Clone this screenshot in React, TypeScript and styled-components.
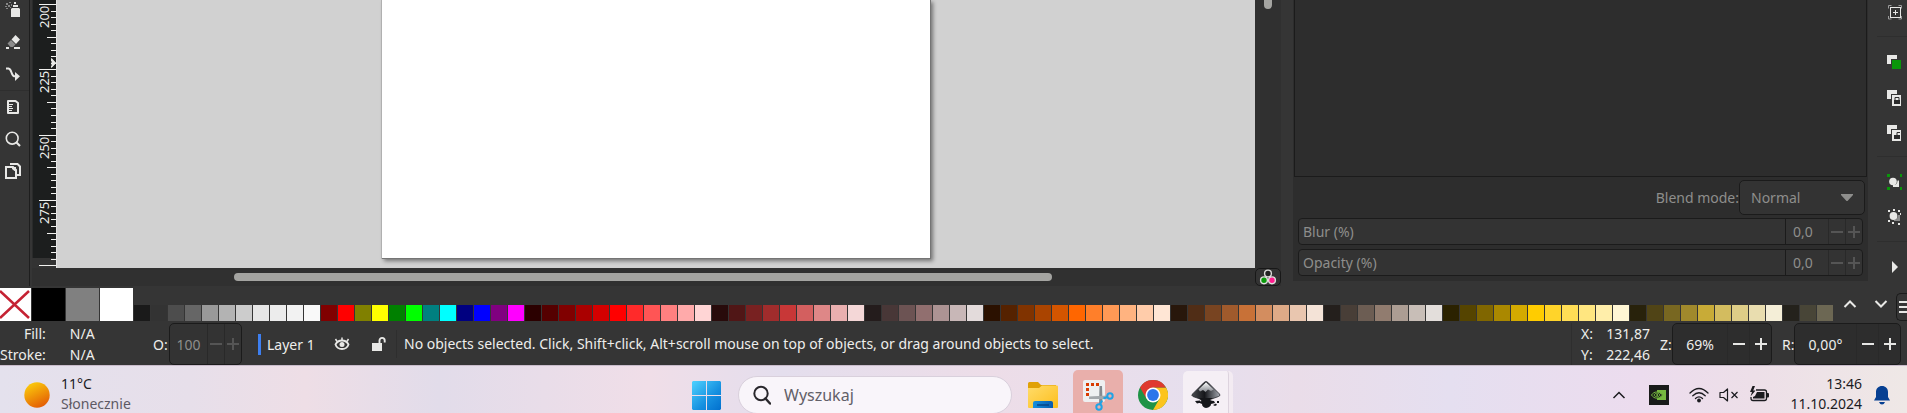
import React from "react";
import styled, { createGlobalStyle, css } from "styled-components";

const GlobalStyle = createGlobalStyle`
  *, *::before, *::after { box-sizing: border-box; }
  body { margin: 0; background: #353535; }
  button, input, select {
    font: inherit;
    color: inherit;
    background: none;
    border: 0;
    margin: 0;
    padding: 0;
    border-radius: 0;
    outline: none;
    appearance: none;
  }
  svg { display: block; flex: none; }
`;

const Desktop = styled.div`
  display: flex;
  flex-direction: column;
  height: 100vh;
  overflow: hidden;
  background: #353535;
  color: #eeeeec;
  font-family: "Noto Sans", "Open Sans", sans-serif;
  font-size: 14px;
  line-height: 21px;
`;

/* ---------- Work area ---------- */

const WorkArea = styled.main`
  display: flex;
  flex: 1;
  min-height: 0;
`;

const ToolBox = styled.nav`
  display: flex;
  flex-direction: column;
  flex: none;
  width: 30px;
  border-right: 1px solid #1e1e1e;
  overflow: hidden;
`;

const ToolList = styled.div`
  margin-top: -6px;
`;

const ToolButton = styled.button`
  display: flex;
  align-items: center;
  justify-content: center;
  width: 26px;
  height: 32px;
`;

const Rule = styled.hr`
  height: 1px;
  margin: 0;
  border: 0;
  background: #2e2e2e;
`;

const Editor = styled.section`
  display: grid;
  grid-template-columns: 24px minmax(0, 1fr) 26px;
  grid-template-rows: minmax(0, 1fr) 18px;
  flex: 1;
  min-width: 0;
  margin-left: 2px;
  background: #303030;
`;

const RulerBox = styled.div`
  overflow: hidden;
  background: #333333;
`;

const Canvas = styled.div`
  display: flex;
  justify-content: center;
  overflow: hidden;
  padding-bottom: 9px;
  background: #d1d1d1;
  border-left: 1px solid #e4e4e4;
`;

const Sheet = styled.div`
  width: 46%;
  max-width: 549px;
  background: #ffffff;
  border: solid #757575;
  border-width: 0 1px 1px 0;
  box-shadow: -1px 0 0 #b0b0b0, 2px 2px 4px rgba(0, 0, 0, 0.45);
`;

const VerticalTrack = styled.div`
  display: flex;
  justify-content: center;
`;

const HorizontalTrack = styled.div`
  display: flex;
  align-items: center;
  grid-column: 1 / 3;
  padding: 0 203px 0 202px;
`;

const VerticalThumb = styled.div`
  width: 8px;
  height: 9px;
  border-radius: 0 0 4px 4px;
  background: #a4a4a1;
`;

const HorizontalThumb = styled.div`
  flex: 1;
  height: 8px;
  border-radius: 4px;
  background: #a4a4a1;
`;

const ColorManageButton = styled.button`
  display: flex;
  align-items: center;
  justify-content: center;
  border: 1px solid #181818;
  border-radius: 5px;
  background: #333333;
`;

/* ---------- Dock panel ---------- */

const Dock = styled.aside`
  display: flex;
  flex-direction: column;
  flex: none;
  width: 575px;
  margin: 0 0 5px 12px;
  background: #2d2d2d;
  color: #8e8e8c;
`;

const ObjectList = styled.div`
  flex: 1;
  margin: 0 1px;
  border: 1px solid #1b1b1b;
  border-top: 0;
`;

const BlendRow = styled.div`
  display: flex;
  align-items: center;
  justify-content: flex-end;
  height: 35px;
  margin: 3px 3px 3px 0;
`;

const SelectBox = styled.div`
  display: grid;
  align-items: center;
  width: 126px;
  height: 35px;
  border: 1px solid #1b1b1b;
  border-radius: 5px;
  background: #333333;

  & > select, & > svg { grid-area: 1 / 1; }
  & > select { height: 33px; padding-left: 11px; }
  & > svg { justify-self: end; margin-right: 11px; pointer-events: none; }
`;

const SliderField = styled.div`
  display: flex;
  height: 27px;
  margin: 0 5px 4px;
  border: 1px solid #1b1b1b;
  border-radius: 4px;
  background: #333333;

  & > label {
    flex: 1;
    padding-left: 4px;
    line-height: 25px;
    border-right: 1px solid #1b1b1b;
  }
  & > input { width: 42px; padding-left: 7px; }

  &:last-child { margin-bottom: 5px; }
`;

const StepButton = styled.button<{ $wide?: boolean; $dim?: boolean }>`
  display: flex;
  align-items: center;
  justify-content: center;
  width: ${(p) => (p.$wide ? 22 : 17)}px;
  border-left: 1px solid #292929;
  color: ${(p) => (p.$dim ? "#555555" : "#e6e6e4")};
`;

const CommandBar = styled.nav`
  flex: none;
  width: 39px;
  padding-left: 9px;
  overflow: hidden;

  & hr { margin: 7px 0; }
`;

const CommandList = styled.div`
  margin-top: -6px;
`;

const CommandButton = styled.button`
  display: flex;
  align-items: center;
  width: 30px;
  height: 35px;
  padding-left: 8px;
`;

/* ---------- Palette ---------- */

const Palette = styled.section`
  display: flex;
  align-items: flex-end;
  flex: none;
  height: 35px;
  overflow: hidden;
`;

const SwatchRow = styled.div`
  display: flex;
  align-items: flex-end;
  gap: 1px;
  flex: 1;
  min-width: 0;
  overflow: hidden;
`;

const Swatch = styled.button<{ $color: string; $large?: boolean }>`
  flex: none;
  background: ${(p) => p.$color};
  ${(p) =>
    p.$large
      ? css`width: 33px; height: 33px;`
      : css`width: 16px; height: 16px;`}
`;

const NoColorSwatch = styled.button`
  flex: none;
  width: 31px;
  height: 33px;
  background: #ffffff;
`;

const PaletteButton = styled.button`
  display: flex;
  align-items: center;
  justify-content: center;
  flex: none;
  width: 31px;
  height: 35px;
`;

const PaletteMenu = styled.button`
  flex: none;
  width: 11px;
  height: 28px;
  padding-left: 2px;
  border: 1px solid #1b1b1b;
  border-right: 0;
  border-radius: 5px 0 0 5px;
`;

/* ---------- Status bar ---------- */

const StatusBar = styled.footer`
  display: flex;
  align-items: center;
  flex: none;
  height: 44px;
  padding: 2px 6px 0 0;
  white-space: nowrap;
`;

const StyleGrid = styled.div`
  display: grid;
  grid-template-columns: auto 1fr;
  column-gap: 24px;
  flex: none;
  width: 153px;

  & > span:nth-child(odd) {
    min-width: 43px;
    text-align: right;
  }
`;

const SpinLabel = styled.label<{ $width: number; $gap?: number }>`
  flex: none;
  width: ${(p) => p.$width}px;
  margin-left: ${(p) => p.$gap ?? 0}px;
`;

const SpinBox = styled.div<{ $width: number; $dim?: boolean }>`
  display: flex;
  flex: none;
  width: ${(p) => p.$width}px;
  height: 42px;
  border: 1px solid #1b1b1b;
  border-radius: 5px;
  background: ${(p) => (p.$dim ? "#333333" : "#2d2d2d")};
  color: ${(p) => (p.$dim ? "#8e8e8c" : "#eeeeec")};

  & > input { flex: 1; min-width: 0; text-align: center; }
`;

const LayerButton = styled.button`
  display: flex;
  align-items: center;
  gap: 6px;
  flex: none;
  width: 74px;
  margin-left: 16px;

  &::before {
    content: "";
    width: 3px;
    height: 21px;
    background: #3d7ff0;
  }
`;

const IconButton = styled.button`
  display: flex;
  align-items: center;
  justify-content: center;
  flex: none;
  width: 20px;
  height: 30px;

  & + & { margin-left: 17px; }
`;

const Message = styled.p`
  flex: 1;
  min-width: 0;
  margin: 0 0 0 7px;
  padding-left: 7px;
  overflow: hidden;
  line-height: 28px;
  border-left: 1px solid #2e2e2e;
`;

const Coordinates = styled.div`
  display: grid;
  grid-template-columns: 1fr auto;
  flex: none;
  width: 89px;
  padding: 0 10px 0 9px;
  border-left: 1px solid #2e2e2e;
`;

/* ---------- Taskbar ---------- */

const Taskbar = styled.footer`
  flex: none;
  height: 48px;
  overflow: hidden;
  border-top: 1px solid #c9bccb;
  color: #1b1b1f;
  background: linear-gradient(
    90deg,
    #e4e1ed 0%, #e7dfea 10%, #eedee6 16%, #e2dcea 23%, #f0dee8 34%,
    #e4deed 41%, #eddde8 52%, #e6dfee 63%, #eadde9 68%, #e5dff0 76%,
    #ecdcee 86%, #eddfe8 92%, #efe8e6 100%
  );
`;

const TaskbarRow = styled.div`
  display: grid;
  grid-template-columns: 1fr auto 1fr;
  align-items: center;
  height: 58px;
`;

const Weather = styled.button`
  display: flex;
  align-items: center;
  gap: 11px;
  padding-left: 24px;
  line-height: 20px;
  text-align: left;

  & > span { padding-bottom: 2px; }
  & small { display: block; font-size: 14px; color: #5d5963; }
`;

const Apps = styled.div`
  display: flex;
  align-items: center;
  padding-left: 18px;
`;

const StartButton = styled.button`
  margin-right: 17px;
`;

const SearchBox = styled.label`
  display: flex;
  align-items: center;
  gap: 13px;
  width: 274px;
  height: 38px;
  margin-right: 6px;
  padding-left: 14px;
  border: 1px solid #d9d0dc;
  border-radius: 19px;
  background: #f9f5fa;
  font-size: 16px;

  & > input { flex: 1; min-width: 0; }
  & > input::placeholder { color: #626068; opacity: 1; }
`;

const AppButton = styled.button<{ $tone?: "alert" | "active" }>`
  display: flex;
  align-items: center;
  justify-content: center;
  flex: none;
  width: 50px;
  height: 50px;
  border-radius: 5px;

  & + & { margin-left: 5px; }

  ${(p) => p.$tone === "alert" && css`background: #e9afab;`}
  ${(p) =>
    p.$tone === "active" &&
    css`
      height: 48px;
      border: solid #f3ebf2;
      border-width: 0 4px 0 0;
      background: #f5eff5;
      box-shadow: inset -1px 0 0 #ddd3de;
    `}
`;

const Tray = styled.div`
  display: flex;
  align-items: center;
  justify-content: flex-end;
  padding-right: 17px;
`;

const TrayButton = styled.button<{ $gap: number }>`
  margin-right: ${(p) => p.$gap}px;
`;

const Clock = styled.button`
  margin-right: 12px;
  padding-bottom: 2px;
  text-align: right;
  line-height: 20px;

  & time { display: block; }
`;

/* ---------- Drawings ---------- */

const INK = "#e8e8e6";

const Ruler = () => {
  const step = 6.53;
  const ticks = Array.from({ length: 41 }, (_, i) => i);
  const labels = ["200", "225", "250", "275"];
  return (
    <svg width="24" height="268" aria-label="Vertical ruler">
      <rect width="24" height="258" fill="#1c1e1e" />
      <rect width="1" height="258" fill="#2a2b2b" />
      {ticks.map((i) => {
        const length = i % 10 === 0 ? 17 : i % 5 === 0 ? 9 : 5;
        return (
          <rect key={i} x={24 - length} y={Math.round(4 + i * step)} width={length} height="1" fill="#f2f2f0" />
        );
      })}
      {labels.map((text, i) => {
        const top = Math.round(4 + i * 10 * step);
        return (
          <svg key={text} x="0" y={top + 2} width="18" height="23">
            <text transform="translate(17 22) rotate(-90)" fill="#eeeeec" fontSize="13">
              {text}
            </text>
          </svg>
        );
      })}
      <path d="M19 58v3h1v5h-1v2l5-5z" fill={INK} />
      <path d="M19.500 58L24 63l-4.500 5z" fill={INK} />
    </svg>
  );
};

const SprayIcon = () => (
  <svg width="16" height="16" viewBox="0 0 16 16">
    <path d="M9 0h2v2H9zM8 3h5v2H8zM6 7l1-1h7l1 1v8H6z" fill={INK} />
    <path d="M1 1h2v2H1zM4 0h2v1H4zM6 2h1v2H6zM3 3h2v2H3zM0 4h2v1H0zM1 6h2v1H1zM5 5h1v1H5z" fill="#858585" />
  </svg>
);

const EraserIcon = () => (
  <svg width="16" height="16" viewBox="0 0 16 16">
    <path d="M10.500 1L15 5.500 11 10 6.500 5.500z" fill={INK} />
    <path d="M6 6l4.500 4.500L8 13H5.500L2.500 9.500z" fill="#8b8b8b" />
    <path d="M1 13h3v2H1zM9 13h6v2H9z" fill={INK} />
  </svg>
);

const ConnectorIcon = () => (
  <svg width="16" height="16" viewBox="0 0 16 16">
    <path d="M1 2.500h2.500C7 3 6 9.500 9 10.200h2" fill="none" stroke={INK} strokeWidth="2" />
    <path d="M10 6l5 4.200L10 15z" fill={INK} />
  </svg>
);

const MeasureIcon = () => (
  <svg width="14" height="16" viewBox="0 0 14 16">
    <path d="M2 2h7.500l2.500 2v10H2z" fill="none" stroke={INK} strokeWidth="2" strokeLinejoin="round" />
    <path d="M3 5.500h4M3 7.500h3M3 9.500h4M3 11.500h3" stroke={INK} />
  </svg>
);

const ZoomIcon = () => (
  <svg width="16" height="16" viewBox="0 0 16 16">
    <circle cx="7.200" cy="7.200" r="5.900" fill="none" stroke={INK} strokeWidth="1.600" />
    <path d="M11 11l4 4" stroke={INK} strokeWidth="2.200" />
  </svg>
);

const PagesIcon = () => (
  <svg width="16" height="16" viewBox="0 0 16 16">
    <path d="M1 4h7l3 3v8H1z" fill="none" stroke={INK} strokeWidth="2" />
    <path d="M7 4h4v4H9.500L7 6z" fill={INK} />
    <path d="M5 1h7.500L15 3.500V12h-3" fill="none" stroke={INK} strokeWidth="2" />
  </svg>
);

const ColorManageIcon = () => (
  <svg width="18" height="16" viewBox="0 0 18 16">
    <g strokeWidth="1.400" stroke="#dededc">
      <circle cx="9" cy="4.500" r="3.400" fill="#222222" />
      <circle cx="5" cy="11.300" r="3.400" fill="#0a9a0a" />
      <circle cx="13" cy="11.300" r="3.400" fill="#ff1d8e" />
    </g>
  </svg>
);

const PageCenterIcon = () => (
  <svg width="20" height="20" viewBox="0 0 20 20">
    <path d="M3.500 6.500v-3h3M13.500 3.500h3v3M16.500 14v3h-3M6.500 17h-3v-3" fill="none" stroke="#9a9a9a" />
    <rect x="5.500" y="5.500" width="10" height="10" fill="none" stroke={INK} />
    <path d="M10.500 8v5M8 10.500h5" stroke={INK} />
  </svg>
);

const CloneIcon = ({ kind }: { kind: "plain" | "locked" | "unlocked" }) => (
  <svg width="20" height="20" viewBox="0 0 20 20">
    <path d="M2 3h10v4H6v5H2z" fill={INK} />
    {kind === "plain" ? (
      <rect x="7" y="8" width="9" height="9" fill="#0a960a" />
    ) : (
      <>
        <rect x="7" y="8" width="9" height="11" fill={INK} />
        <rect x="9" y="13" width="6" height="4" fill="#2b2b2b" />
        <path
          d={kind === "locked" ? "M10 13v-2.500h4V13" : "M12 13v-2.500h3"}
          fill="none"
          stroke="#2b2b2b"
        />
      </>
    )}
  </svg>
);

const GroupIcon = () => (
  <svg width="20" height="20" viewBox="0 0 20 20">
    <path d="M2 2h3v3H2zM15 2h2v3h-2zM2 15h3v3H2zM15 15h2v3h-2z" fill="#0a960a" />
    <path d="M12.500 8.500H14V15H8v-2c3 0 4.500-1.500 4.500-4.500z" fill={INK} />
    <circle cx="8" cy="9.500" r="3.800" fill={INK} />
  </svg>
);

const UngroupIcon = () => (
  <svg width="20" height="20" viewBox="0 0 20 20">
    <path d="M3 3h2v2H3zM8 2h2v2H8zM13 3h2v2h-2zM15 6h1v2h-1zM3 13h2v2H3zM7 15h2v2H7zM13 16h2v2h-2z" fill={INK} />
    <path d="M13 8h2v6H9v-1c2.500 0 4-2 4-5z" fill="#8b8b8b" />
    <circle cx="8.500" cy="9" r="3.900" fill={INK} />
  </svg>
);

const ExpandIcon = () => (
  <svg width="20" height="20" viewBox="0 0 20 20">
    <path d="M7 4l6 6-6 6z" fill={INK} />
  </svg>
);

const Minus = ({ size }: { size: number }) => (
  <svg width={size} height={size} viewBox="0 0 12 12">
    <path d="M0 6h12" stroke="currentColor" strokeWidth="2" />
  </svg>
);

const Plus = ({ size }: { size: number }) => (
  <svg width={size} height={size} viewBox="0 0 12 12">
    <path d="M0 6h12M6 0v12" stroke="currentColor" strokeWidth="2" />
  </svg>
);

const EyeIcon = () => (
  <svg width="16" height="16" viewBox="0 0 16 16">
    <path d="M1.500 8.500C3 5.500 5 4.500 8 4.500s5 1 6.500 4c-1 3-3.500 4.500-6.500 4.500s-5.500-1.500-6.500-4.500z" fill="none" stroke={INK} strokeWidth="1.800" />
    <path d="M3 5.500L1.500 3M8 4V1.500M13 5.500L14.500 3" stroke={INK} strokeWidth="1.500" />
    <circle cx="8" cy="8.500" r="2.500" fill={INK} />
  </svg>
);

const UnlockIcon = () => (
  <svg width="16" height="16" viewBox="0 0 16 16">
    <rect x="1" y="7" width="10" height="8" fill={INK} />
    <path d="M8.500 7V4.500a2.600 2.600 0 0 1 5.200 0V6.500" fill="none" stroke={INK} strokeWidth="1.900" />
  </svg>
);

const Chevron = ({ up, stroke, width = 2 }: { up?: boolean; stroke: string; width?: number }) => (
  <svg width="14" height="10" viewBox="0 0 14 10">
    <path d={up ? "M1.500 8L7 2.500 12.500 8" : "M1.500 2L7 7.500 12.500 2"} fill="none" stroke={stroke} strokeWidth={width} />
  </svg>
);

const SunIcon = () => (
  <svg width="26" height="26" viewBox="0 0 26 26">
    <defs>
      <linearGradient id="sun" x1="0.200" y1="0" x2="0.700" y2="1">
        <stop offset="0" stopColor="#fccf0c" />
        <stop offset="1" stopColor="#e35a04" />
      </linearGradient>
    </defs>
    <circle cx="13" cy="13" r="12.700" fill="url(#sun)" />
  </svg>
);

const WindowsIcon = () => (
  <svg width="29" height="29" viewBox="0 0 29 29">
    <defs>
      <linearGradient id="win" x1="0" y1="0" x2="1" y2="1" gradientUnits="objectBoundingBox">
        <stop offset="0" stopColor="#4fd2ff" />
        <stop offset="0.600" stopColor="#1690e0" />
        <stop offset="1" stopColor="#0270ce" />
      </linearGradient>
    </defs>
    <path d="M1 0h13v14H0V1zM15 0h13l1 1v13H15zM0 15h14v14H1l-1-1zM15 15h14v13l-1 1H15z" fill="url(#win)" />
  </svg>
);

const SearchIcon = () => (
  <svg width="18" height="20" viewBox="0 0 18 20">
    <circle cx="8" cy="8.500" r="6.700" fill="none" stroke="#29272c" strokeWidth="2" />
    <path d="M12.500 13.500l4.500 5" stroke="#29272c" strokeWidth="2.400" strokeLinecap="round" />
  </svg>
);

const FolderIcon = () => (
  <svg width="30" height="28" viewBox="0 0 30 28">
    <defs>
      <linearGradient id="folder" x1="0" y1="0" x2="1" y2="1">
        <stop offset="0" stopColor="#ffdc6b" />
        <stop offset="1" stopColor="#fdbe1c" />
      </linearGradient>
      <linearGradient id="tray" x1="0" y1="0" x2="1" y2="0">
        <stop offset="0" stopColor="#1590de" />
        <stop offset="1" stopColor="#0a5cae" />
      </linearGradient>
    </defs>
    <path d="M0 2.500Q0 1 1.500 1H10l3 3h15v6H0z" fill="#e0a106" />
    <path d="M0 7h11l3-2.500h15q1 0 1 1V26q0 1-1 1H1q-1 0-1-1z" fill="url(#folder)" />
    <path d="M5 27v-5q0-2 2-2h16q2 0 2 2v5z" fill="url(#tray)" />
    <path d="M9 24h12" stroke="#074383" strokeWidth="1.400" />
  </svg>
);

const SnipIcon = () => (
  <svg width="32" height="32" viewBox="0 0 32 32">
    <rect x="1" y="1" width="22" height="22" rx="2" fill="#eef0f1" />
    <path d="M4 4h3v3H4zM9 4h3v3H9zM14 4h3v3h-3zM4 9h3v3H4zM4 14h3v3H4z" fill="#d83b01" />
    <path d="M17.500 7h2.500l.5 16-3.500 3z" fill="#858a8f" />
    <path d="M7 17.500V20h17l2-3.500z" fill="#a3a8ac" />
    <circle cx="17" cy="28" r="2.700" fill="none" stroke="#20a3e5" strokeWidth="2" />
    <circle cx="28" cy="17" r="2.700" fill="none" stroke="#20a3e5" strokeWidth="2" />
    <path d="M18 25.500l2-4M25.500 18l-4 1.500" stroke="#20a3e5" strokeWidth="2" />
  </svg>
);

const ChromeIcon = () => (
  <svg width="30" height="30" viewBox="0 0 30 30">
    <circle cx="15" cy="15" r="15" fill="#1f9346" />
    <path d="M15 30l6.500-11.300L15 7.500h13A15 15 0 0 1 15 30z" fill="#fcc41d" />
    <path d="M8.500 18.700L2 7.500A15 15 0 0 1 28 7.500H15z" fill="#df3a2e" />
    <circle cx="15" cy="15" r="7.500" fill="#ffffff" />
    <circle cx="15" cy="15" r="5.900" fill="#2b76ea" />
  </svg>
);

const InkscapeIcon = () => (
  <svg width="30" height="30" viewBox="0 0 30 30">
    <defs>
      <linearGradient id="ink" x1="0" y1="0" x2="1" y2="0">
        <stop offset="0" stopColor="#4a4c50" />
        <stop offset="0.450" stopColor="#15161a" />
        <stop offset="1" stopColor="#a5a9b2" />
      </linearGradient>
      <linearGradient id="snow" x1="0" y1="0" x2="0" y2="1">
        <stop offset="0" stopColor="#ffffff" />
        <stop offset="1" stopColor="#85888e" />
      </linearGradient>
    </defs>
    <path d="M13 2.500q2-2 4 0L28.500 14q1.500 1.500-1 2.500l-7 2.500H9l-7-2.500q-2-1-.5-2.500z" fill="url(#ink)" stroke="#2a2b30" strokeWidth="0.800" />
    <path d="M15 2.200L22.500 9.500l-2.500 1.500-3-1.500-2.500 2.500-2.500-2-3 1.500-1.500-2z" fill="url(#snow)" />
    <path d="M8 18h14l-3 2q2 1 4 1l1 2-4 1q0 3-5 4-4-1-4-4l-3.500-1.500 3-1.500z" fill="#15161a" />
    <path d="M4 21l5-.5 1 2-4 1zM22 25l3-1.500 1 1.500-2 1zM26 21h2v2h-2z" fill="#15161a" />
  </svg>
);

const NvidiaIcon = () => (
  <svg width="20" height="20" viewBox="0 0 20 20">
    <rect width="20" height="20" fill="#191b1a" />
    <path d="M8 5h9v10H8z" fill="#76b83f" />
    <path d="M2.500 10C5 6 10 6 13.500 10 10 14.500 5 14 2.500 10z" fill="#191b1a" stroke="#76b83f" />
    <path d="M5 10c1.500-2.500 4.500-2.500 6 0-1.500 2.500-4.500 2.500-6 0z" fill="none" stroke="#76b83f" />
    <circle cx="8.200" cy="10" r="1" fill="#76b83f" />
  </svg>
);

const WifiIcon = () => (
  <svg width="20" height="16" viewBox="0 0 20 16">
    <g fill="none" stroke="#1b1b1f" strokeWidth="1.300" strokeLinecap="round">
      <path d="M1 6q9-9 18 0M3.800 8.800q6.200-6 12.400 0M6.500 11.500q3.500-3.200 7 0" />
    </g>
    <circle cx="10" cy="13.500" r="1.900" fill="#1b1b1f" />
  </svg>
);

const MuteIcon = () => (
  <svg width="20" height="16" viewBox="0 0 20 16">
    <path d="M1 5.500h3.500L8.500 2v12l-4-3.500H1z" fill="none" stroke="#1b1b1f" strokeWidth="1.200" strokeLinejoin="round" />
    <path d="M12.500 5l6 6M18.500 5l-6 6" stroke="#1b1b1f" strokeWidth="1.200" />
  </svg>
);

const BatteryIcon = () => (
  <svg width="20" height="18" viewBox="0 0 20 18">
    <path d="M7 4h8.500q2 0 2 2v6.500q0 2-2 2H4q-2 0-2-2V11" fill="none" stroke="#1b1b1f" strokeWidth="1.300" />
    <path d="M8 6h7.500v6.500H4V11l2-1z" fill="#1b1b1f" />
    <path d="M18 7h1q1 0 1 1v2.500q0 1-1 1h-1z" fill="#1b1b1f" />
    <path d="M3.500 0L1 6h2L1.500 10.500 6.500 4.500H4.200L6 0z" fill="#1b1b1f" />
  </svg>
);

const BellIcon = () => (
  <svg width="16" height="20" viewBox="0 0 16 20">
    <path d="M8 1c3.500 0 6 2.500 6 6v5l2 3.500H0L2 12V7c0-3.500 2.500-6 6-6z" fill="#063f92" />
    <path d="M5 17h6q-1 2.500-3 2.500T5 17z" fill="#063f92" />
  </svg>
);

/* ---------- Data ---------- */

const LARGE = ["#000000", "#808080", "#ffffff"];

const SMALL = (
  "1a1a1a 333333 4d4d4d 666666 999999 b3b3b3 cccccc e6e6e6 ececec f2f2f2 f9f9f9 " +
  "800000 ff0000 808000 ffff00 008000 00ff00 008080 00ffff 000080 0000ff 800080 ff00ff " +
  "2b0000 550000 800000 aa0000 d40000 ff0000 ff2a2a ff5555 ff8080 ffaaaa ffd5d5 " +
  "280b0b 501616 782121 a02c2c c83737 d35f5f de8787 e9afaf f4d7d7 " +
  "241c1c 483737 6c5353 916f6f ac9393 c8b7b7 e3dbdb " +
  "2b1100 552200 803300 aa4400 d45500 ff6600 ff7f2a ff9955 ffb380 ffccaa ffe6d5 " +
  "28170b 502d16 784421 a05a2c c87137 d38d5f deaa87 e9c6af f4e3d7 " +
  "241f1c 483e37 6c5d53 917c6f ac9d93 c8beb7 e3dedb " +
  "2b2200 554400 806600 aa8800 d4aa00 ffcc00 ffd42a ffdd55 ffe680 ffeeaa fff6d5 " +
  "28220b 504416 786721 a0892c c8ab37 d3bc5f decd87 e9ddaf f4eed7 " +
  "24221c 484537 6c6753"
).split(" ");

/* ---------- Composite controls ---------- */

const Steps = ({ name, wide, dim }: { name: string; wide?: boolean; dim?: boolean }) => (
  <>
    <StepButton $wide={wide} $dim={dim} aria-label={`Decrease ${name}`}>
      <Minus size={12} />
    </StepButton>
    <StepButton $wide={wide} $dim={dim} aria-label={`Increase ${name}`}>
      <Plus size={12} />
    </StepButton>
  </>
);

const Slider = ({ id, label }: { id: string; label: string }) => (
  <SliderField>
    <label htmlFor={id}>{label}</label>
    <input id={id} defaultValue="0,0" />
    <Steps name={label} dim />
  </SliderField>
);

export default function App() {
  return (
    <>
      <GlobalStyle />
      <Desktop>
        <WorkArea>
          <ToolBox aria-label="Tools">
            <ToolList>
              <ToolButton aria-label="Spray"><SprayIcon /></ToolButton>
              <ToolButton aria-label="Eraser"><EraserIcon /></ToolButton>
              <ToolButton aria-label="Connector"><ConnectorIcon /></ToolButton>
              <Rule />
              <ToolButton aria-label="Measure"><MeasureIcon /></ToolButton>
              <ToolButton aria-label="Zoom"><ZoomIcon /></ToolButton>
              <ToolButton aria-label="Pages"><PagesIcon /></ToolButton>
            </ToolList>
          </ToolBox>

          <Editor>
            <RulerBox><Ruler /></RulerBox>
            <Canvas><Sheet /></Canvas>
            <VerticalTrack><VerticalThumb /></VerticalTrack>
            <HorizontalTrack><HorizontalThumb /></HorizontalTrack>
            <ColorManageButton aria-label="Color management"><ColorManageIcon /></ColorManageButton>
          </Editor>

          <Dock>
            <ObjectList />
            <BlendRow>
              <label htmlFor="blend">Blend mode:</label>
              <SelectBox>
                <select id="blend" defaultValue="Normal">
                  <option>Normal</option>
                </select>
                <svg width="12" height="8" viewBox="0 0 12 8">
                  <path d="M0 0h12v1L6.500 7h-1L0 1z" fill="#8e8e8c" />
                </svg>
              </SelectBox>
            </BlendRow>
            <Slider id="blur" label="Blur (%)" />
            <Slider id="opacity" label="Opacity (%)" />
          </Dock>

          <CommandBar aria-label="Commands">
            <CommandList>
              <CommandButton aria-label="Zoom page center"><PageCenterIcon /></CommandButton>
              <Rule />
              <CommandButton aria-label="Duplicate"><CloneIcon kind="plain" /></CommandButton>
              <CommandButton aria-label="Clone"><CloneIcon kind="locked" /></CommandButton>
              <CommandButton aria-label="Unlink clone"><CloneIcon kind="unlocked" /></CommandButton>
              <Rule />
              <CommandButton aria-label="Group"><GroupIcon /></CommandButton>
              <CommandButton aria-label="Ungroup"><UngroupIcon /></CommandButton>
              <Rule />
              <CommandButton aria-label="More commands"><ExpandIcon /></CommandButton>
            </CommandList>
          </CommandBar>
        </WorkArea>

        <Palette aria-label="Color palette">
          <SwatchRow>
            <NoColorSwatch aria-label="None">
              <svg width="31" height="33" viewBox="0 0 31 33">
                <path d="M0 3l29 27M0 30L29 3" stroke="#c52233" strokeWidth="2.500" />
              </svg>
            </NoColorSwatch>
            {LARGE.map((c) => (
              <Swatch key={c} $color={c} $large aria-label={c} />
            ))}
            {SMALL.map((c, i) => (
              <Swatch key={i} $color={`#${c}`} aria-label={`#${c}`} />
            ))}
          </SwatchRow>
          <PaletteButton aria-label="Previous colors"><Chevron up stroke={INK} /></PaletteButton>
          <PaletteButton aria-label="Next colors"><Chevron stroke={INK} /></PaletteButton>
          <PaletteMenu aria-label="Palette menu">
            <svg width="8" height="14" viewBox="0 0 8 14">
              <path d="M0 2h8M0 7h8M0 12h8" stroke={INK} strokeWidth="2" />
            </svg>
          </PaletteMenu>
        </Palette>

        <StatusBar>
          <StyleGrid>
            <span>Fill:</span>
            <span>N/A</span>
            <span>Stroke:</span>
            <span>N/A</span>
          </StyleGrid>
          <SpinLabel $width={16} htmlFor="object-opacity">O:</SpinLabel>
          <SpinBox $width={73} $dim>
            <input id="object-opacity" defaultValue="100" />
            <Steps name="opacity" dim />
          </SpinBox>
          <LayerButton>Layer 1</LayerButton>
          <IconButton aria-label="Toggle layer visibility"><EyeIcon /></IconButton>
          <IconButton aria-label="Toggle layer lock"><UnlockIcon /></IconButton>
          <Message>
            No objects selected. Click, Shift+click, Alt+scroll mouse on top of objects, or drag around objects to select.
          </Message>
          <Coordinates>
            <span>X:</span>
            <span>131,87</span>
            <span>Y:</span>
            <span>222,46</span>
          </Coordinates>
          <SpinLabel $width={12} htmlFor="zoom">Z:</SpinLabel>
          <SpinBox $width={100}>
            <input id="zoom" defaultValue="69%" />
            <Steps name="zoom" wide />
          </SpinBox>
          <SpinLabel $width={12} $gap={10} htmlFor="rotation">R:</SpinLabel>
          <SpinBox $width={107}>
            <input id="rotation" defaultValue="0,00°" />
            <Steps name="rotation" wide />
          </SpinBox>
        </StatusBar>

        <Taskbar>
          <TaskbarRow>
            <Weather>
              <SunIcon />
              <span>
                11°C
                <small>Słonecznie</small>
              </span>
            </Weather>
            <Apps>
              <StartButton aria-label="Start"><WindowsIcon /></StartButton>
              <SearchBox>
                <SearchIcon />
                <input type="text" placeholder="Wyszukaj" aria-label="Wyszukaj" />
              </SearchBox>
              <AppButton aria-label="File Explorer"><FolderIcon /></AppButton>
              <AppButton $tone="alert" aria-label="Snipping Tool"><SnipIcon /></AppButton>
              <AppButton aria-label="Chrome"><ChromeIcon /></AppButton>
              <AppButton $tone="active" aria-label="Inkscape"><InkscapeIcon /></AppButton>
            </Apps>
            <Tray>
              <TrayButton $gap={23} aria-label="Show hidden icons"><Chevron up stroke="#1b1b1f" width={1.5} /></TrayButton>
              <TrayButton $gap={20} aria-label="NVIDIA settings"><NvidiaIcon /></TrayButton>
              <TrayButton $gap={10} aria-label="Network"><WifiIcon /></TrayButton>
              <TrayButton $gap={10} aria-label="Volume"><MuteIcon /></TrayButton>
              <TrayButton $gap={21} aria-label="Battery"><BatteryIcon /></TrayButton>
              <Clock>
                <time>13:46</time>
                <time>11.10.2024</time>
              </Clock>
              <TrayButton $gap={0} aria-label="Notifications"><BellIcon /></TrayButton>
            </Tray>
          </TaskbarRow>
        </Taskbar>
      </Desktop>
    </>
  );
}
